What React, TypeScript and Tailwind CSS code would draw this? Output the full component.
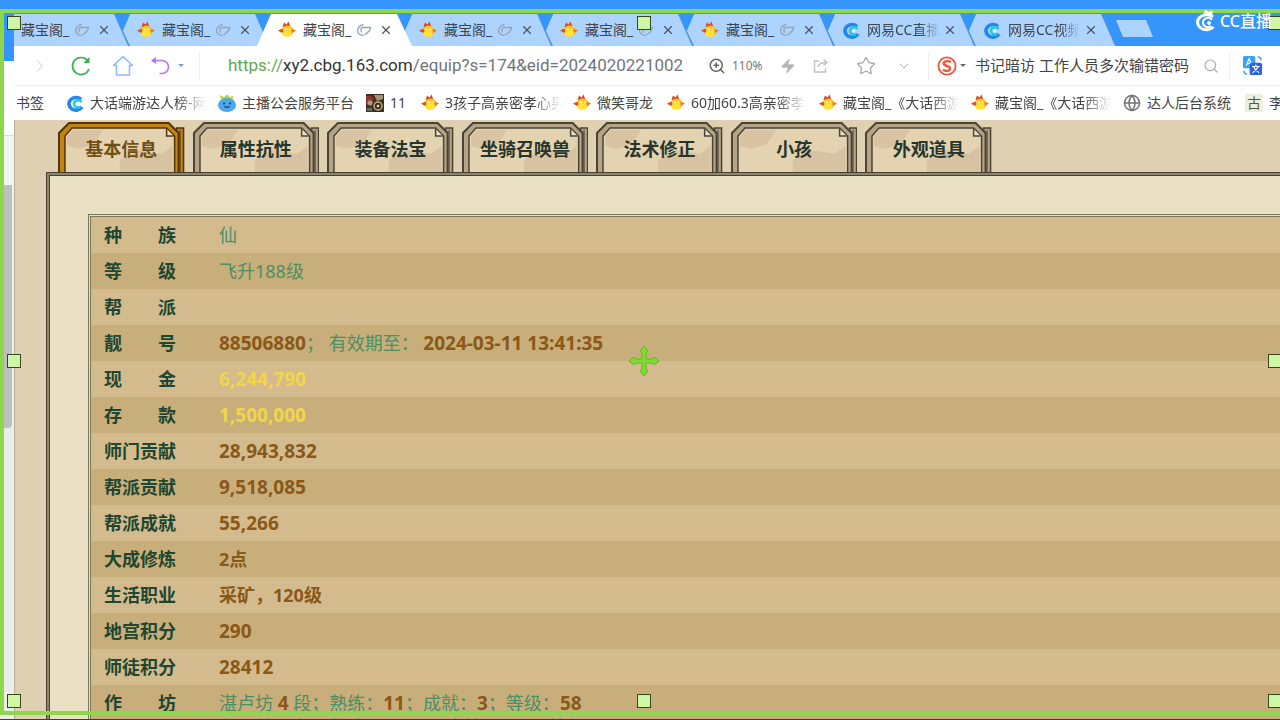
import { ReactNode } from 'react';
import { ChevronDown, ChevronRight, Globe, Search, Star, X, Zap, ZoomIn } from 'lucide-react';

type Favicon = 'chick' | 'cc' | 'blob' | 'photo' | 'globe' | 'seal';

interface BrowserTab {
  title: string;
  icon: Favicon;
  fade?: boolean;
}

interface Bookmark {
  label: string;
  icon: Favicon;
  width: string;
  fade?: boolean;
}

interface InfoRow {
  label: string;
  value: ReactNode;
}

const BROWSER_TABS: BrowserTab[] = [
  { title: '藏宝阁_', icon: 'chick' },
  { title: '藏宝阁_', icon: 'chick' },
  { title: '藏宝阁_', icon: 'chick' },
  { title: '藏宝阁_', icon: 'chick' },
  { title: '藏宝阁_', icon: 'chick' },
  { title: '藏宝阁_', icon: 'chick' },
  { title: '网易CC直播', icon: 'cc', fade: true },
  { title: '网易CC视频', icon: 'cc', fade: true },
];
const ACTIVE_TAB = 2;

const BOOKMARKS: Bookmark[] = [
  { label: '大话端游达人榜-网', icon: 'cc', width: 'w-[152px]', fade: true },
  { label: '主播公会服务平台', icon: 'blob', width: 'w-[148px]' },
  { label: '11', icon: 'photo', width: 'w-[55px]' },
  { label: '3孩子高亲密孝心男', icon: 'chick', width: 'w-[152px]', fade: true },
  { label: '微笑哥龙', icon: 'chick', width: 'w-[94px]' },
  { label: '60加60.3高亲密孝', icon: 'chick', width: 'w-[152px]', fade: true },
  { label: '藏宝阁_《大话西游', icon: 'chick', width: 'w-[152px]', fade: true },
  { label: '藏宝阁_《大话西游', icon: 'chick', width: 'w-[152px]', fade: true },
  { label: '达人后台系统', icon: 'globe', width: 'w-[122px]' },
  { label: '李白', icon: 'seal', width: 'w-[152px]' },
];

const SECTIONS = ['基本信息', '属性抗性', '装备法宝', '坐骑召唤兽', '法术修正', '小孩', '外观道具'];

function Num({ children }: { children: ReactNode }) {
  return <b className="text-[19px] font-bold text-[#8a5817]">{children}</b>;
}

function Word({ children }: { children: ReactNode }) {
  return <b className="font-bold text-[#8a5817]">{children}</b>;
}

function Gold({ children }: { children: ReactNode }) {
  return <b className="text-[19px] font-bold text-[#f0d648]">{children}</b>;
}

const ROWS: InfoRow[] = [
  { label: '种族', value: '仙' },
  { label: '等级', value: '飞升188级' },
  { label: '帮派', value: '' },
  { label: '靓号', value: <><Num>88506880</Num>； 有效期至： <Num>2024-03-11 13:41:35</Num></> },
  { label: '现金', value: <Gold>6,244,790</Gold> },
  { label: '存款', value: <Gold>1,500,000</Gold> },
  { label: '师门贡献', value: <Num>28,943,832</Num> },
  { label: '帮派贡献', value: <Num>9,518,085</Num> },
  { label: '帮派成就', value: <Num>55,266</Num> },
  { label: '大成修炼', value: <Word>2点</Word> },
  { label: '生活职业', value: <Word>采矿，120级</Word> },
  { label: '地宫积分', value: <Num>290</Num> },
  { label: '师徒积分', value: <Num>28412</Num> },
  {
    label: '作坊',
    value: (
      <>
        <div>湛卢坊 <Num>4</Num> 段；熟练：<Num>11</Num>；成就：<Num>3</Num>；等级：<Num>58</Num></div>
        <div>七巧坊 <Num>7</Num> 段；熟练：<Num>5300</Num>；成就：<Num>271</Num>；等级：<Num>136</Num></div>
      </>
    ),
  },
];

function Chick() {
  return (
    <svg viewBox="0 0 18 18" className="size-[18px] shrink-0">
      <path d="M4.500 6 6 1.500 8.500 3.500 10.500 .5 12.500 6Z" fill="#d8482a" />
      <ellipse cx="9.5" cy="10" rx="6" ry="5.600" fill="#fbc81f" />
      <path d="M0 9.500 4.500 7.500 5.500 11.500 3 11.500Z" fill="#e2501f" />
      <path d="M13.500 7.500 18 9.500 14 12Z" fill="#ee7a1c" />
      <ellipse cx="9" cy="12.800" rx="4.500" ry="3" fill="#ffe436" />
      <circle cx="8" cy="8.500" r="1.300" fill="#fff0a0" />
      <circle cx="11.500" cy="8.500" r="1" fill="#fff3b0" />
    </svg>
  );
}

function CcIcon() {
  return (
    <svg viewBox="0 0 18 18" className="size-[18px] shrink-0">
      <path d="M10.500 1.500 13 3l2.500-.5-.7 3.500-4-1Z" fill="#bfe04a" />
      <path d="M15 5.500A7 6.300 0 1 0 16 13" fill="none" stroke="#2186ee" strokeWidth="3.600" />
      <path d="M15.500 8a4 3.600 0 1 0-1.500 5" fill="none" stroke="#22c8e0" strokeWidth="2.600" />
      <circle cx="11.500" cy="10" r="1.600" fill="#fff" />
    </svg>
  );
}

function FaviconImage({ icon }: { icon: Favicon }) {
  if (icon === 'chick') return <Chick />;
  if (icon === 'cc') return <CcIcon />;
  if (icon === 'globe') return <Globe className="size-[18px] shrink-0 text-[#6f7276]" strokeWidth={2} />;
  if (icon === 'seal') {
    return <span className="flex size-[18px] shrink-0 items-center justify-center bg-[#edf0dd] text-sm text-[#555a48]">古</span>;
  }
  if (icon === 'photo') {
    return (
      <svg viewBox="0 0 18 18" className="size-[18px] shrink-0">
        <rect width="18" height="18" fill="#3e2e24" />
        <path d="M0 2h5l3 3-3 4H0Z" fill="#8b3a30" />
        <path d="M8 1h9v4l-6 2Z" fill="#a39273" />
        <path d="M3 6 7 8 5 12 1 10Z" fill="#b39c7c" />
        <circle cx="12" cy="12" r="4" fill="none" stroke="#c5ad72" strokeWidth="1.500" />
        <path d="M1 14h5v3H1Z" fill="#60705a" />
        <circle cx="12" cy="12" r="1.300" fill="#e2d9b9" />
      </svg>
    );
  }
  return (
    <svg viewBox="0 0 18 18" className="size-[18px] shrink-0">
      <path d="M1.500 1 6 3l3-2.500L12 3l3.500-1.500-1 5H4Z" fill="#b5d94b" />
      <ellipse cx="9" cy="11" rx="9" ry="7" fill="#4ba8ea" />
      <circle cx="6" cy="9.500" r="1.100" fill="#1d3f66" />
      <circle cx="12" cy="9.500" r="1.100" fill="#1d3f66" />
      <path d="M6.500 12.200q2.500 2.400 5 0" fill="none" stroke="#1d3f66" strokeWidth="1.200" />
    </svg>
  );
}

function TabStrip() {
  return (
    <div className="flex h-8 items-stretch overflow-hidden">
      <div className="-ml-[39px] flex">
        {BROWSER_TABS.map((tab, i) => {
          const active = i === ACTIVE_TAB;
          return (
            <div
              key={i}
              className={`relative -mr-[14px] w-[155px] shrink-0 [clip-path:polygon(14px_0,140px_0,100%_100%,0_100%)] ${active ? 'bg-white' : 'bg-[#4a93e6]'}`}
              style={{ zIndex: active ? 20 : 10 - i }}
            >
              <div
                className={`flex h-full items-center pl-[21px] text-sm text-[#3d4550] [clip-path:polygon(14px_0,139px_0,153px_100%,0_100%)] ${active ? 'bg-white' : 'bg-[#add4fe]'}`}
              >
                <FaviconImage icon={tab.icon} />
                <span className={`ml-[7px] overflow-hidden whitespace-nowrap ${tab.fade ? 'w-[76px] [mask-image:linear-gradient(to_right,#000_70%,transparent_95%)]' : 'w-[53px]'}`}>
                  {tab.title}
                </span>
                {!tab.fade && (
                  <svg viewBox="0 0 16 14" className="mr-[7px] h-[14px] w-4 shrink-0" fill="none" stroke="#95a2b1" strokeWidth="1.300">
                    <path d="M7.500 1.500Q2 3 1.500 7.500q.5 4.500 6 5" />
                    <path d="M5.500 9.500Q4 5 6.500 4.500h8Q14.500 8 8.500 12" />
                  </svg>
                )}
                <button type="button" aria-label="关闭标签页" className="text-[#4a5564]">
                  <X className="size-[14px]" strokeWidth={2} />
                </button>
              </div>
            </div>
          );
        })}
      </div>
      <button
        type="button"
        aria-label="新建标签页"
        className="ml-[13px] mt-[6px] h-[17px] w-[37px] shrink-0 bg-[#add4fe] [clip-path:polygon(0_0,30px_0,100%_100%,7px_100%)]"
      />
    </div>
  );
}

function Toolbar() {
  return (
    <div className="flex h-10 items-center overflow-hidden whitespace-nowrap border-b border-[#ececec] bg-white">
      <button type="button" aria-label="前进" className="ml-4 text-[#dfe2e8]"><ChevronRight className="size-5" strokeWidth={1.5} /></button>
      <button type="button" aria-label="刷新" className="ml-5">
        <svg viewBox="0 0 22 22" className="size-[22px]" fill="none" stroke="#35b04c" strokeWidth="1.700">
          <path d="M17.500 5.500A8.500 8.500 0 1 0 19 14" />
          <path d="M19.500 2V8H13.500Z" fill="#35b04c" stroke="none" />
        </svg>
      </button>
      <button type="button" aria-label="主页" className="ml-5">
        <svg viewBox="0 0 22 22" className="size-[22px]" fill="none" stroke="#8bbaf5" strokeWidth="1.500" strokeLinejoin="round">
          <path d="M1.500 10.500 11 1.500 20.500 10.500H17.500V20H4.500V10.500Z" />
        </svg>
      </button>
      <button type="button" aria-label="恢复" className="ml-4 flex items-center">
        <svg viewBox="0 0 20 20" className="size-5" fill="none" stroke="#b27be6" strokeWidth="1.600">
          <path d="M2 4.500H12A6.500 6.500 0 0 1 12 17.500H9.500" />
          <path d="M6 1 1 4.500 6 8Z" fill="#b27be6" stroke="none" />
        </svg>
        <span className="ml-2 border-x-[3px] border-t-[3px] border-x-transparent border-t-[#6f9fe8]" />
      </button>
      <span className="ml-[15px] h-7 w-px bg-[#efefef]" />
      <div className="ml-7 w-[456px] overflow-hidden font-['Roboto','Noto_Sans',sans-serif] text-[17px] text-[#72757a]">
        <span className="text-[#5cab4a]">https://</span>
        <span className="text-[#333]">xy2.cbg.163.com</span>/equip?s=174&amp;eid=2024020221002
      </div>
      <ZoomIn className="ml-6 size-[18px] shrink-0 text-[#666]" strokeWidth={2} />
      <span className="ml-[6px] w-9 text-xs text-[#777]">110%</span>
      <Zap className="ml-3 size-4 shrink-0 fill-[#b5b5b5] text-[#b5b5b5]" strokeWidth={1} />
      <svg viewBox="0 0 16 16" className="ml-[17px] size-4 shrink-0" fill="none" stroke="#c2c2c2" strokeWidth="1.400">
        <path d="M6 3H1.500V14H12.500V10M5 9Q6 4.500 13 4.500M10.500 1.500 14 4.500 10.500 7.500" />
      </svg>
      <Star className="ml-[27px] size-5 shrink-0 text-[#a5a5a5]" strokeWidth={1.5} />
      <ChevronDown className="ml-5 size-4 shrink-0 text-[#b0b0b0]" strokeWidth={1.5} />
      <span className="ml-4 h-7 w-px bg-[#efefef]" />
      <svg viewBox="0 0 20 20" className="ml-2 size-5 shrink-0" fill="none" stroke="#f0533a">
        <circle cx="10" cy="10" r="8.600" strokeWidth="1.800" />
        <path d="M14 6Q9 4 6.800 6.500 6 9 10 10q4 1 3 3.500-2 2.500-7.200.5" strokeWidth="2.400" />
      </svg>
      <span className="ml-[3px] border-x-[3px] border-t-[3px] border-x-transparent border-t-[#666]" />
      <input
        type="text"
        aria-label="搜索"
        defaultValue="书记暗访 工作人员多次输错密码"
        className="ml-[9px] w-[220px] bg-transparent text-[15px] text-[#444] outline-none"
      />
      <Search className="ml-2 size-4 shrink-0 text-[#aaa]" strokeWidth={1.8} />
      <span className="ml-[10px] h-7 w-px bg-[#efefef]" />
      <svg viewBox="0 0 22 22" className="ml-3 size-[21px] shrink-0">
        <rect x="1" y="1" width="13" height="13" rx="2" fill="#35a4f4" />
        <path d="M4.500 11 7.500 4 10.500 11M5.500 9H9.500" fill="none" stroke="#fff" strokeWidth="1.300" />
        <rect x="8" y="8" width="13" height="13" rx="2" fill="#2d62dc" />
        <path d="M10.500 12H18.500M14.500 10V12M17 12Q15.500 16 11 18.500M12 12Q13.500 16 18 18.500" fill="none" stroke="#fff" strokeWidth="1.200" />
        <path d="M16.500 2Q20 2 20 5.500M2 16.500Q2 20 5.500 20" fill="none" stroke="#35a4f4" strokeWidth="1.600" />
      </svg>
    </div>
  );
}

function BookmarkBar() {
  return (
    <div className="flex h-[34px] items-center overflow-hidden whitespace-nowrap bg-white text-sm text-[#444]">
      <span className="ml-[2px] w-[50px] shrink-0">书签</span>
      {BOOKMARKS.map((b, i) => (
        <a key={i} href="#" className={`flex shrink-0 items-center pr-3 ${b.width}`}>
          <FaviconImage icon={b.icon} />
          <span className={`ml-[6px] overflow-hidden ${b.fade ? '[mask-image:linear-gradient(to_right,#000_75%,transparent)]' : ''}`}>{b.label}</span>
        </a>
      ))}
    </div>
  );
}

// 做旧木框页签,选中时为金色边框
function SectionTab({ label, active }: { label: string; active: boolean }) {
  const frame = active ? '#c58310' : '#b3a585';
  const line = active ? '#50350c' : '#4b4436';
  return (
    <div className="pr-2">
      <button
        type="button"
        className={`relative isolate block h-[50px] w-full pt-1 text-lg font-bold leading-[46px] ${active ? 'text-[#6f4f14]' : 'text-[#28352c]'}`}
      >
        <svg viewBox="0 0 127 50" preserveAspectRatio="none" className="absolute inset-0 -z-10 size-full">
          <path d="M119 6H126V51H119Z" fill={frame} stroke={line} strokeWidth="1.500" />
          <path d="M122.500 8V50" stroke={line} strokeWidth="1" />
          <path d="M1 51V11L11 1H111L121 11V51Z" fill={frame} stroke={line} strokeWidth="2" />
          <path d="M7 51V14L14 6H109L117 14V51Z" fill="#e3d3b1" stroke={line} strokeWidth="1.500" />
          <path d="M9 14 15 8H45L36 22 20 27 9 24Z" fill="#cdb694" opacity=".5" />
          <path d="M62 38 80 28 104 32 115 24V50H62Z" fill="#cbb491" opacity=".5" />
          <path d="M109 7V14H116" fill="#e9dfc6" stroke={line} strokeWidth="1.500" />
        </svg>
        {label}
      </button>
    </div>
  );
}

function InfoTable() {
  return (
    <table className="w-full border-collapse text-lg">
      <tbody>
        {ROWS.map(row => (
          <tr key={row.label} className="h-9 odd:bg-[#d3bb8e] even:bg-[#c8ae7b]">
            <th scope="row" className="w-32 py-[6px] pl-[13px] pr-0 align-top font-bold leading-6 text-[#1f4630]">
              <span className="flex w-[72px] justify-between">
                {row.label.length === 2 ? [...row.label].map(c => <span key={c}>{c}</span>) : row.label}
              </span>
            </th>
            <td className="whitespace-nowrap py-[6px] align-top leading-6 text-[#4c8f62]">{row.value}</td>
          </tr>
        ))}
      </tbody>
    </table>
  );
}

function Handle({ place }: { place: string }) {
  return <span className={`absolute size-[14px] border border-[#39471f] bg-[#cdf7a5] ${place}`} />;
}

// 录屏区域的选框
function CaptureFrame() {
  return (
    <div className="pointer-events-none absolute inset-0 z-40 overflow-hidden border-b border-[#4a3c22]">
      <div className="absolute -right-2 bottom-1 left-0 top-[9px] border-4 border-[#8ed64b]" />
      <Handle place="left-[7px] top-4" />
      <Handle place="left-[637px] top-4" />
      <Handle place="-right-[2px] top-4" />
      <Handle place="left-[7px] top-[354px]" />
      <Handle place="-right-[2px] top-[354px]" />
      <Handle place="bottom-[11px] left-[7px]" />
      <Handle place="bottom-[11px] left-[637px]" />
      <Handle place="-right-[2px] bottom-[11px]" />
      <svg viewBox="0 0 32 32" className="absolute left-[628px] top-[345px] size-8">
        <path
          d="M16 1 20 6 18 8V14H24L26 12 31 16 26 20 24 18H18V24L20 26 16 31 12 26 14 24V18H8L6 20 1 16 6 12 8 14H14V8L12 6Z"
          fill="#7fdc2c"
          stroke="#6ab42e"
          strokeWidth="1"
        />
      </svg>
    </div>
  );
}

function Watermark() {
  return (
    <div className="absolute right-2 top-[9px] z-50 flex items-center gap-[3px] text-white">
      <svg viewBox="0 0 24 24" className="size-6" fill="none" stroke="#fff">
        <path d="M20 8A9 7.500 0 1 0 20.500 18" strokeWidth="3" />
        <path d="M19 11A5 4.500 0 1 0 18 17" strokeWidth="2" />
        <path d="M11 4 13 1 15 3.500 19 2 19 7" fill="#fff" strokeWidth="1" />
        <circle cx="16" cy="14" r="1.500" fill="#fff" />
      </svg>
      <span className="text-base font-medium leading-6">CC直播</span>
    </div>
  );
}

export default function App() {
  return (
    <div className="relative flex h-screen overflow-hidden bg-[#3595fb] font-['Noto_Sans','Noto_Sans_CJK_SC',sans-serif]">
      <aside className="flex w-[14px] shrink-0 flex-col pt-[61px]">
        <div className="h-[74px] shrink-0 bg-white" />
        <div className="h-[50px] shrink-0 border-t border-[#dcdcdc] bg-[#f4f4f4]" />
        <div className="flex-1 border-r-2 border-[#f0f0f0] bg-[#ececec]">
          <div className="h-[243px] rounded-b-sm bg-[#bfbfc3]" />
        </div>
      </aside>

      <div className="flex min-w-0 flex-1 flex-col pt-[14px]">
        <TabStrip />
        <Toolbar />
        <BookmarkBar />
        <main className="min-h-0 flex-1 overflow-hidden border-l border-[#b9ae93] bg-[#ded0b1] pl-[31px] pt-[2px]">
          <nav className="ml-3 grid w-[942px] grid-cols-7">
            {SECTIONS.map((s, i) => <SectionTab key={s} label={s} active={i === 0} />)}
          </nav>
          <div className="bg-[#8d866f]">
            <section className="border-l-4 border-t-4 border-double border-[#474132] bg-[#eae0c3] bg-clip-padding pl-[38px] pt-[38px]">
              <div className="border-l-[3px] border-t-[3px] border-double border-[#7b7759]">
                <InfoTable />
              </div>
            </section>
          </div>
        </main>
      </div>

      <CaptureFrame />
      <Watermark />
    </div>
  );
}
